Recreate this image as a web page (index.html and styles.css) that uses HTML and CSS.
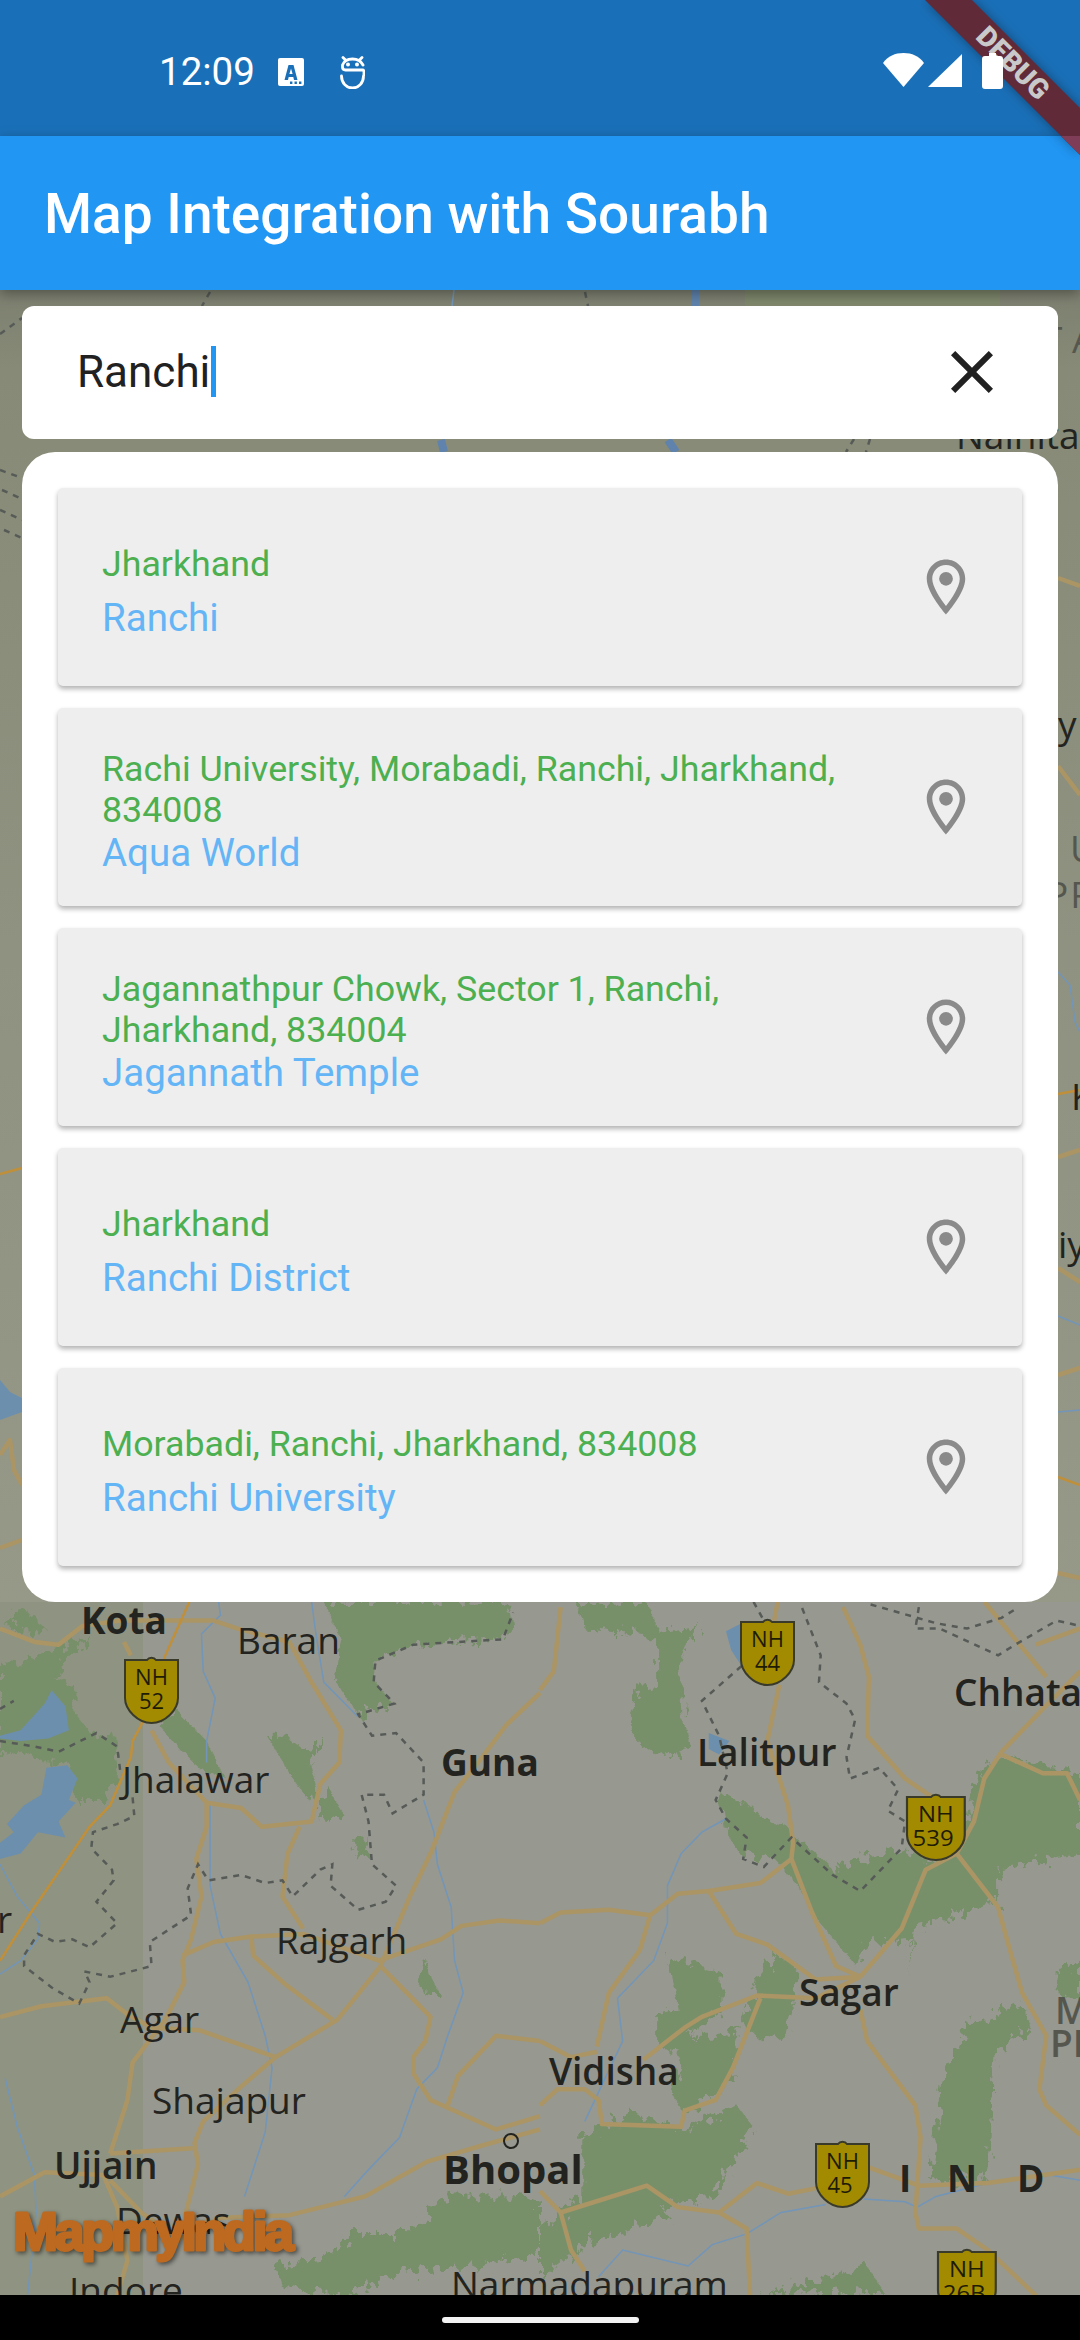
FILE: index.html
```html
<!DOCTYPE html>
<html lang="en">
<head>
<meta charset="utf-8">
<title>Map Integration with Sourabh</title>
<link rel="stylesheet" href="styles.css">
</head>
<body>
<div class="screen">
  <header class="status">
    <div class="status-left">
      <span class="time">12:09</span>
      <svg class="ic-a" viewBox="0 0 26 28"><path class="w" fill-rule="evenodd" d="M2 0h22a2 2 0 0 1 2 2v24a2 2 0 0 1-2 2H2a2 2 0 0 1-2-2V2a2 2 0 0 1 2-2zM10.500 7l-4 15h3.500l.700-3h4.600l.700 3h3.500l-4-15zM13 10.500l1.600 5.500h-3.200zM12 23.500h2.400v2.400H12zM16.500 23.500h2.400v2.400h-2.400zM21 23.500h2.400v2.400H21z"/></svg>
      <svg class="ic-r" viewBox="0 0 25 33"><path class="line" d="M3 1.500l2.500 2.500M22 1.500L19.500 4M23 9C21 5 17 3 12.500 3S4 5 2.500 9v2c0 2 1 3 3 3h17c1 0 1.500 1 1.500 2v3M1.500 20c0 7 5 12 11 12s11-5 11-12"/><circle class="w" cx="8" cy="8.500" r="2"/><circle class="w" cx="17" cy="8.500" r="2"/></svg>
    </div>
    <div class="status-right">
      <svg class="ic-wifi" viewBox="0 0 41 34"><path class="w" d="M0 10C5 3 12 0 20.500 0S36 3 41 10L20.500 34z"/></svg>
      <svg class="ic-sig" viewBox="0 0 34 33"><path class="w" d="M34 0v33H0z"/></svg>
      <svg class="ic-bat" viewBox="0 0 21 36"><path class="w" d="M7 0h7v3h4a3 3 0 0 1 3 3v27a3 3 0 0 1-3 3H3a3 3 0 0 1-3-3V6a3 3 0 0 1 3-3h4z"/></svg>
    </div>
  </header>

  <header class="appbar"><h1 class="title">Map Integration with Sourabh</h1></header>

  <main class="main">
    <svg class="map" viewBox="0 290 1080 2005" aria-label="Map">
      <defs>
        <path id="sh" d="M0 0H22C24 -3 29 -3 31 0H53V38C53 50 40 63 26.500 63S0 50 0 38Z"/>
        <linearGradient id="topfade" x1="0" y1="0" x2="0" y2="1">
          <stop offset="0" stop-color="#7d8070"/>
          <stop offset=".06" stop-color="#868a76"/>
          <stop offset=".5" stop-color="#8f9280"/>
          <stop offset="1" stop-color="#969888"/>
        </linearGradient>
        <filter id="rough" x="-5%" y="-5%" width="110%" height="110%">
          <feTurbulence type="fractalNoise" baseFrequency=".045" numOctaves="3" seed="7"/>
          <feDisplacementMap in="SourceGraphic" scale="46"/>
        </filter>
      </defs>
      <rect class="m-base" x="0" y="290" width="1080" height="2005"/>
      <rect x="0" y="290" width="1080" height="1312" fill="url(#topfade)"/>
      <rect class="m-strip" x="0" y="1602" width="143" height="693"/>

      <!-- side details -->
      <path class="forest-soft" d="M745 290H1000V306H745Z"/>
      <path class="dash" d="M0 334L22 318M0 470L22 478M2 490L20 498M0 510L22 520M4 530L22 538M210 292L202 306M585 292L588 306M854 439L846 452M870 439L866 452"/>
      <path class="river" d="M454 290L452 306"/>
      <path class="river thick" d="M695 290V306M441 440L444 452M668 440L676 452"/>
      <path class="orange" d="M0 1174L22 1168M1058 1094L1080 1090M1058 1477L1080 1485"/>
      <path class="road" d="M1058 578L1080 586M1058 766L1080 795M1058 1157L1080 1150M1058 1268L1080 1282M1058 1375L1080 1368M1058 1573L1080 1578M0 1548L22 1540M0 1455L10 1440L14 1470L22 1485"/>
      <path class="river" d="M1058 972L1070 985L1075 1022L1080 1032M1058 1316L1080 1325M1058 1412L1080 1410"/>
      <path class="water" d="M0 1380L10 1392L22 1398V1412L0 1420Z"/>
      <text class="lb lb-gray" x="1042" y="353">T A</text>
      <text class="lb" x="956" y="449">Nainita</text>
      <text class="lb" x="1058" y="738">y</text>
      <text class="lb lb-gray" x="1070" y="862">U</text>
      <text class="lb lb-gray sp" x="1046" y="908">PP</text>
      <text class="lb" x="1071" y="1110">K</text>
      <text class="lb" x="1058" y="1258">iy</text>

      <!-- south-west map -->
      <g class="tile" transform="translate(0 1500) scale(.3444 .5357)">
        <path class="forest" d="M20 240L60 200L130 235L120 250L60 245ZM0 300L60 305L130 280L270 250L190 300L160 335L215 345L220 400L270 440L335 440L345 520L300 560L220 560L200 490L140 490L60 470L0 480ZM460 420L510 390L600 450L650 515L600 510L530 470ZM940 190H1480L1490 230L1460 260L1200 270L1090 300L1090 340L1140 380L1040 400L975 340L990 260ZM775 440L830 440L880 465L950 450L900 490L920 540L910 570L860 530ZM920 590L950 530L990 580L960 600ZM1025 630H1070L1065 665H1030ZM1205 885L1240 860L1250 890L1280 925L1230 920ZM800 1430L960 1410L1020 1370L1180 1370L1300 1300H1568V1400L1400 1430L1180 1440L1000 1485L820 1470Z"/>
        <path class="water" d="M0 440L60 430L130 380L150 355L190 385L200 430L140 445L60 450L0 445ZM135 500L195 495L225 520L200 560L220 565L170 600L190 630L110 620L60 660L0 670V640L40 620L20 605L70 570L120 550Z"/>
        <path class="river" d="M635 190L640 215L585 250L590 320L625 370L600 450V490M905 190L915 240L940 340L1040 405M1230 560L1260 620L1270 680L1310 760L1320 860L1345 920L1300 1000L1270 1060L1210 1100L1160 1190L1070 1250L1000 1300M610 570V720L640 810L720 900L770 1000L790 1060L770 1180L710 1300M0 680L50 740L115 790L110 820L60 860L0 885M15 1080L50 1170L100 1260L105 1330L80 1485"/>
        <path class="road" d="M0 240L100 265L170 270L240 235L350 225H620L690 240L840 265L900 335L990 430L985 490L930 530L905 600L760 610L700 575L600 565L490 490L440 430M360 265L380 290M600 565V610L570 670L585 740L555 820L530 860L535 900L480 970L385 1050L370 1120L320 1220M870 610L835 660L820 740L880 800M530 850L620 825L730 815L880 810L1100 860L1280 820L1340 795L1450 785L1568 790M730 815L735 850L830 905L965 970M1105 870L980 970L800 1040L700 1095L590 1160L565 1200L575 1240L540 1330M1568 360L1470 420L1400 480L1320 545L1250 660L1190 740L1105 870M1105 870L1250 965L1235 1010L1200 1040V1070L1250 1120L1440 1175L1568 1150M0 965L120 945L310 930L370 960L440 985L580 990L800 1040M1568 1010L1440 1000L1330 1075L1300 1130M0 1300L130 1255L300 1260L340 1320L370 1420L340 1485M320 1220L560 1210M320 1270L410 1330L520 1380L640 1340L840 1335L1060 1300L1240 1235L1400 1205L1568 1175"/>
        <path class="orange" d="M550 190L480 290L410 420L385 450L380 480L320 570L260 610L90 770L0 860"/>
        <path class="dash" d="M0 390L40 375M0 450L100 460L170 470L280 435L340 460L350 510M385 555L390 590L340 605L270 620L265 650L325 690L330 710L280 750L340 790L260 835L210 820L160 825L110 810L70 850V870L150 910L230 940L260 900L245 880L320 890L440 870L435 825L555 775L545 725L575 680L605 710L700 700L770 715L820 710L850 740L930 690L965 680L960 720L1040 765L1120 750L1150 720L1080 680L1070 600L1050 550L1115 550L1140 585L1230 550V490L1150 435L1080 440L1040 400L1145 380L1085 340L1090 300L1200 270L1460 260L1490 210"/>
      </g>

      <!-- south-east map -->
      <g class="tile" transform="translate(540 1500) scale(.3444 .5357)">
        <path class="forest" d="M105 190H310L350 250L465 235L410 290L420 420L440 460L340 480L270 440L260 400L290 350L340 350L340 260L300 250L130 240ZM520 540L650 590L730 620L850 690L1040 650L1130 670L1240 600L1270 510L1350 480L1568 510V660L1330 690V750L1090 800L1070 890L1090 820L940 830L920 870L800 780L750 720L680 670L580 660L540 620ZM370 850L530 880V950L430 1000L540 1000L580 980L560 1080L420 1150L380 1100L410 1030L340 1020V960L400 950ZM590 980L640 880L690 845L750 880L720 1000L650 1010ZM1130 1270L1170 1080L1240 980L1400 940L1430 990L1320 1030L1310 1170L1300 1270ZM1500 880L1568 860V930L1500 920ZM120 1190L270 1145L420 1180L570 1130L620 1170L500 1300L350 1320L380 1340L130 1390L0 1450V1360L120 1300ZM640 1485L860 1445L950 1430L1000 1480Z"/>
        <path class="water" d="M540 245L585 230V310L555 280ZM490 435L550 450L520 475L490 465Z"/>
        <path class="river" d="M540 595L470 620L410 660L370 720V790L330 860L225 930L240 1010L130 1160M940 1305L1060 1310L1095 1320L1150 1300L1300 1275L1480 1260L1568 1270M830 1315L700 1330L600 1370L500 1390L430 1430L240 1400L170 1450"/>
        <path class="road" d="M0 355L40 320L60 200M690 190L680 225M695 345L660 450L720 570L735 640L730 670L790 770L860 870L930 890M880 200L930 270L955 330L950 440L1060 520L1140 555M1568 320L1460 390L1340 470L1290 520L1260 600L1210 660L1120 690L1050 800L930 890M1340 475L1460 510H1530L1568 560M1210 660L1330 760L1360 830L1400 920L1470 1000L1450 1100L1470 1130L1568 1185M730 670L640 715L490 730L400 735L320 775L200 765L60 770L0 790M490 730L570 810L660 830L800 895L930 890M320 775L290 840L200 920L165 1020M930 890L800 930L630 925L470 965L420 985L300 1045M640 930L560 1060L510 1120L420 1140L410 1170L180 1165L170 1120L130 1100H50L0 1130M0 1010L90 1040L165 1030M930 950L950 1010L1090 1130L1105 1190L1090 1330L1100 1360H1210L1300 1400L1440 1485M1568 1250L1300 1275L1100 1280L950 1245M800 1285L720 1295L630 1275L520 1330L400 1320L310 1280L60 1330L0 1290M520 1330L600 1360L610 1485M60 1330L90 1400L130 1440M1290 190L1470 330M1568 240L1440 270"/>
        <path class="dash" d="M620 190L650 225M585 310L470 375L520 440L545 510L510 560L540 595L600 630L590 670L650 685L730 630L850 700L930 730L1050 650L1060 600L1010 580L1040 540L985 500L900 520L890 480L915 410L890 380L810 340L815 290L760 200M960 195L1150 230L1240 240L1340 220L1390 200M1100 200L1090 240L1160 240L1330 290L1380 270L1500 225L1568 235"/>
      </g>

      <!-- labels -->
      <text class="lb b" x="81" y="1634">Kota</text>
      <text class="lb" x="237" y="1654">Baran</text>
      <text class="lb" x="122" y="1793">Jhalawar</text>
      <text class="lb b" x="441" y="1776">Guna</text>
      <text class="lb" x="276" y="1954">Rajgarh</text>
      <text class="lb" x="120" y="2033">Agar</text>
      <text class="lb" x="152" y="2114">Shajapur</text>
      <text class="lb s" x="54" y="2179">Ujjain</text>
      <text class="lb" x="116" y="2234">Dewas</text>
      <text class="lb" x="69" y="2304">Indore</text>
      <text class="lb b lb-big" x="443" y="2184">Bhopal</text>
      <text class="lb" x="-3" y="1933">r</text>
      <text class="lb" x="451" y="2298">Narmadapuram</text>
      <text class="lb s" x="697" y="1766">Lalitpur</text>
      <text class="lb s" x="954" y="1706">Chhata</text>
      <text class="lb s" x="799" y="2006">Sagar</text>
      <text class="lb s" x="549" y="2085">Vidisha</text>
      <text class="lb lb-gray s" x="1055" y="2024">M</text>
      <text class="lb lb-gray s" x="1050" y="2057">PI</text>
      <text class="lb b" x="899" y="2192">I</text>
      <text class="lb b" x="947" y="2192">N</text>
      <text class="lb b" x="1017" y="2192">D</text>
      <circle class="city" cx="511" cy="2141" r="7"/>

      <!-- highway shields -->
      <g transform="translate(125 1660)"><use href="#sh" class="shield"/><text class="nh" x="26.500" y="25">NH</text><text class="nh" x="26.500" y="49">52</text></g>
      <g transform="translate(741 1622)"><use href="#sh" class="shield"/><text class="nh" x="26.500" y="25">NH</text><text class="nh" x="26.500" y="49">44</text></g>
      <g transform="translate(907 1797) scale(1.090 1)"><use href="#sh" class="shield"/><text class="nh" x="26.500" y="25">NH</text><text class="nh" x="24" y="49">539</text></g>
      <g transform="translate(816 2144)"><use href="#sh" class="shield"/><text class="nh" x="26.500" y="25">NH</text><text class="nh" x="24" y="49">45</text></g>
      <g transform="translate(938 2252) scale(1.090 1)"><use href="#sh" class="shield"/><text class="nh" x="26.500" y="25">NH</text><text class="nh" x="24" y="49">26B</text></g>

      <text class="logo" x="13" y="2250" textLength="281" lengthAdjust="spacing">MapmyIndia</text>
    </svg>

    <section class="search">
      <div class="search-field"><span class="query">Ranchi</span><span class="caret"></span></div>
      <svg class="close" viewBox="0 0 24 24"><path d="M19 6.410 17.590 5 12 10.590 6.410 5 5 6.410 10.590 12 5 17.590 6.410 19 12 13.410 17.590 19 19 17.590 13.410 12z"/></svg>
    </section>

    <section class="results">
      <article class="card">
        <div class="texts">
          <p class="addr addr-single">Jharkhand</p>
          <p class="name">Ranchi</p>
        </div>
        <svg class="pin" viewBox="0 0 24 24"><use href="#pin"/></svg>
      </article>
      <article class="card">
        <div class="texts">
          <p class="addr">Rachi University, Morabadi, Ranchi, Jharkhand, 834008</p>
          <p class="name">Aqua World</p>
        </div>
        <svg class="pin" viewBox="0 0 24 24"><use href="#pin"/></svg>
      </article>
      <article class="card">
        <div class="texts">
          <p class="addr">Jagannathpur Chowk, Sector 1, Ranchi, Jharkhand, 834004</p>
          <p class="name">Jagannath Temple</p>
        </div>
        <svg class="pin" viewBox="0 0 24 24"><use href="#pin"/></svg>
      </article>
      <article class="card">
        <div class="texts">
          <p class="addr addr-single">Jharkhand</p>
          <p class="name">Ranchi District</p>
        </div>
        <svg class="pin" viewBox="0 0 24 24"><use href="#pin"/></svg>
      </article>
      <article class="card">
        <div class="texts">
          <p class="addr addr-single">Morabadi, Ranchi, Jharkhand, 834008</p>
          <p class="name">Ranchi University</p>
        </div>
        <svg class="pin" viewBox="0 0 24 24"><use href="#pin"/></svg>
      </article>
    </section>
  </main>

  <footer class="navbar"><span class="home-pill"></span></footer>

  <svg class="banner" viewBox="0 0 160 160">
    <polygon class="band" points="5,0 52,0 160,108 160,155"/>
    <polygon class="band-low" points="141,136 160,136 160,155"/>
    <text class="banner-text" transform="translate(93 63) rotate(45)" x="0" y="0">DEBUG</text>
  </svg>

  <svg class="defs" width="0" height="0">
    <defs>
      <g id="pin">
        <path fill-rule="evenodd" d="M12 2C8.130 2 5 5.130 5 9c0 5.250 7 13 7 13s7-7.750 7-13c0-3.870-3.130-7-7-7zM7 9c0-2.760 2.240-5 5-5s5 2.240 5 5c0 2.880-2.880 7.190-5 9.880C9.920 16.210 7 11.850 7 9z"/>
        <circle cx="12" cy="9" r="2.500"/>
      </g>
    </defs>
  </svg>
</div>
</body>
</html>
```
FILE: styles.css
```css
* { box-sizing: border-box; }
html, body { margin: 0; padding: 0; }
body { font-family: Roboto, "Liberation Sans", sans-serif; background: #000; }
.screen { position: relative; width: 1080px; height: 2340px; overflow: hidden; display: flex; flex-direction: column; }

/* status bar */
.status { height: 136px; flex: none; background: #1a70b8; display: flex; justify-content: space-between; align-items: flex-start; padding: 0 77px 0 159px; }
.status-left { display: flex; align-items: center; height: 72px; margin-top: 36px; }
.time { color: #fff; font-size: 38.500px; line-height: 1; width: 119px; }
.ic-a { width: 26px; height: 28px; margin-right: 36px; }
.ic-r { width: 25px; height: 33px; }
.status-right { display: flex; align-items: flex-end; margin-top: 53px; height: 36px; position: relative; z-index: 6; }
.ic-wifi { width: 41px; height: 34px; margin-right: 4px; margin-bottom: 2px; }
.ic-sig { width: 34px; height: 33px; margin-right: 20px; margin-bottom: 2px; }
.ic-bat { width: 21px; height: 36px; }
.w { fill: #fff; }
.line { fill: none; stroke: #fff; stroke-width: 2.800; stroke-linecap: round; }

/* app bar */
.appbar { height: 154px; flex: none; background: #2196f3; display: flex; align-items: center; padding: 2px 0 0 44px; box-shadow: 0 4px 12px rgba(0,0,0,.35); position: relative; z-index: 3; }
.title { margin: 0; color: #fff; font-weight: 500; font-size: 55px; line-height: 1; }

/* main */
.main { flex: 1; min-height: 0; position: relative; padding: 16px 22px 0; display: flex; flex-direction: column; gap: 13px; overflow: hidden; }
.map { position: absolute; left: 0; top: 0; width: 1080px; height: 2005px; }
.search, .results { position: relative; z-index: 1; }

.search { height: 133px; flex: none; background: #fff; border-radius: 12px; display: flex; align-items: center; justify-content: space-between; padding: 0 50px 2px 55px; }
.search-field { display: flex; align-items: center; }
.query { color: #212121; font-size: 44px; line-height: 52px; }
.caret { width: 5px; height: 51px; background: #2196f3; margin-left: 1px; }
.close { width: 72px; height: 72px; fill: #212121; }

.results { background: #fff; border-radius: 33px; padding: 36px; display: flex; flex-direction: column; gap: 22px; }
.card { height: 198px; background: #eeeeee; border-radius: 5px; box-shadow: 0 3px 5px rgba(0,0,0,.3); display: flex; align-items: center; padding-left: 44px; padding-right: 44px; }
.texts { width: 790px; flex: none; padding-top: 10px; }
.addr { margin: 0; color: #4caf50; font-size: 35.750px; line-height: 41px; }
.addr-single { margin-bottom: 11px; }
.name { margin: 0; color: #64b5f6; font-size: 38.500px; line-height: 44px; }
.pin { width: 66px; height: 66px; fill: #8a8a8a; margin-left: 21px; flex: none; }

/* nav */
.navbar { height: 45px; flex: none; background: #000; display: flex; justify-content: center; padding-top: 22px; position: relative; z-index: 2; }
.home-pill { width: 197px; height: 6px; border-radius: 3px; background: #f2f2f2; }

/* debug banner */
.banner { position: absolute; top: 0; right: 0; width: 160px; height: 160px; z-index: 5; }
.band { fill: #612a38; filter: drop-shadow(0 0 6px rgba(0,0,0,.35)); }
.band-low { fill: #7f3d57; }
.banner-text { fill: #c9c9c9; font-family: Roboto, sans-serif; font-weight: 900; font-size: 28px; text-anchor: middle; dominant-baseline: central; }
.defs { position: absolute; }

/* map */
.m-base { fill: #979890; }
.m-strip { fill: #8f9381; }
.tile path { vector-effect: non-scaling-stroke; }
.forest { fill: #78906a; filter: url(#rough); }
.forest-soft { fill: #7f8b68; opacity: .6; }
.water { fill: #6c8fae; }
.river { fill: none; stroke: #7295b8; stroke-width: 1.500; }
.river.thick { stroke-width: 8px; stroke: #5f83ad; }
.road { fill: none; stroke: #ab9565; stroke-width: 4.500; stroke-linejoin: round; }
.orange { fill: none; stroke: #c08f3a; stroke-width: 2.500; }
.dash { fill: none; stroke: #565b58; stroke-width: 2.500; stroke-dasharray: 6 6; }
.lb { font-family: "Open Sans", "DejaVu Sans", sans-serif; font-size: 37px; fill: #232320; }
.lb.s { font-weight: 600; }
.lb.b { font-weight: 700; }
.lb.lb-big { font-size: 40px; }
.lb.sp { letter-spacing: 2px; }
.lb-gray { fill: #55574f; }
.city { fill: none; stroke: #232320; stroke-width: 2; }
.shield { fill: #a28b00; stroke: #3a3a2a; stroke-width: 2; }
.nh { font-family: "Open Sans", sans-serif; font-size: 22px; fill: #1e1c05; text-anchor: middle; }
.logo { font-family: "Liberation Sans", sans-serif; font-weight: 700; font-size: 54px; fill: #bd6a20; stroke: #bd6a20; stroke-width: 3px; stroke-linejoin: round; paint-order: stroke; filter: drop-shadow(2px 2px 2px rgba(0,0,0,.5)); }
```
